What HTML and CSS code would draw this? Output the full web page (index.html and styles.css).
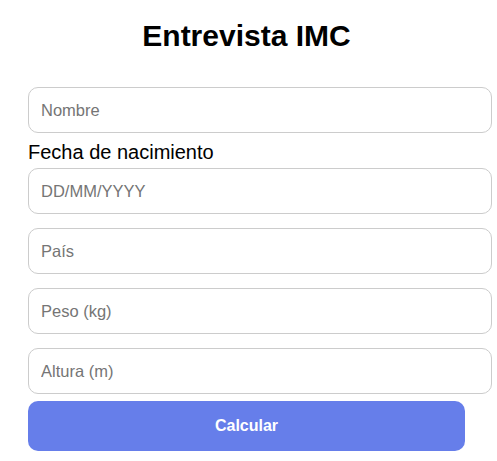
FILE: index.html
```html
<!DOCTYPE html>
<html lang="es">
<head>
<meta charset="utf-8">
<title>Entrevista IMC</title>
<link rel="stylesheet" href="styles.css">
</head>
<body>
<main class="page">
  <h1 class="title">Entrevista IMC</h1>
  <form class="form">
    <input class="field field-first" type="text" placeholder="Nombre">
    <label class="label" for="fecha">Fecha de nacimiento</label>
    <input class="field" id="fecha" type="text" placeholder="DD/MM/YYYY">
    <input class="field field-gap" type="text" placeholder="País">
    <input class="field field-gap" type="text" placeholder="Peso (kg)">
    <input class="field field-gap" type="text" placeholder="Altura (m)">
    <button class="button" type="button">Calcular</button>
  </form>
</main>
</body>
</html>
```

FILE: styles.css
```css
html, body {
  margin: 0;
  padding: 0;
  background: #ffffff;
}

body {
  font-family: "Liberation Sans", Arial, sans-serif;
  color: #000000;
}

.page {
  width: 437px;
  padding-left: 28px;
}

.title {
  margin: 19px 0 34px;
  font-size: 30px;
  line-height: 34px;
  font-weight: bold;
  text-align: center;
}

.form {
  display: flex;
  flex-direction: column;
  align-items: flex-start;
}

.field {
  display: block;
  width: 437px;
  height: 20px;
  padding: 12px 13px 12px 12px;
  margin: 0;
  border: 1px solid #cccccc;
  border-radius: 10px;
  font-family: "Liberation Sans", Arial, sans-serif;
  font-size: 16.5px;
  line-height: 20px;
  color: #000000;
  background: #ffffff;
  outline: none;
}

.field::placeholder {
  color: #757575;
}

.field-gap {
  margin-top: 14px;
}

.label {
  display: block;
  margin: 8px 0 5px;
  font-size: 20px;
  line-height: 22px;
}

.button {
  margin-top: 7px;
  width: 437px;
  height: 50px;
  border: none;
  border-radius: 10px;
  background: #667eea;
  color: #ffffff;
  font-family: "Liberation Sans", Arial, sans-serif;
  font-size: 16px;
  font-weight: bold;
  cursor: pointer;
}
```
